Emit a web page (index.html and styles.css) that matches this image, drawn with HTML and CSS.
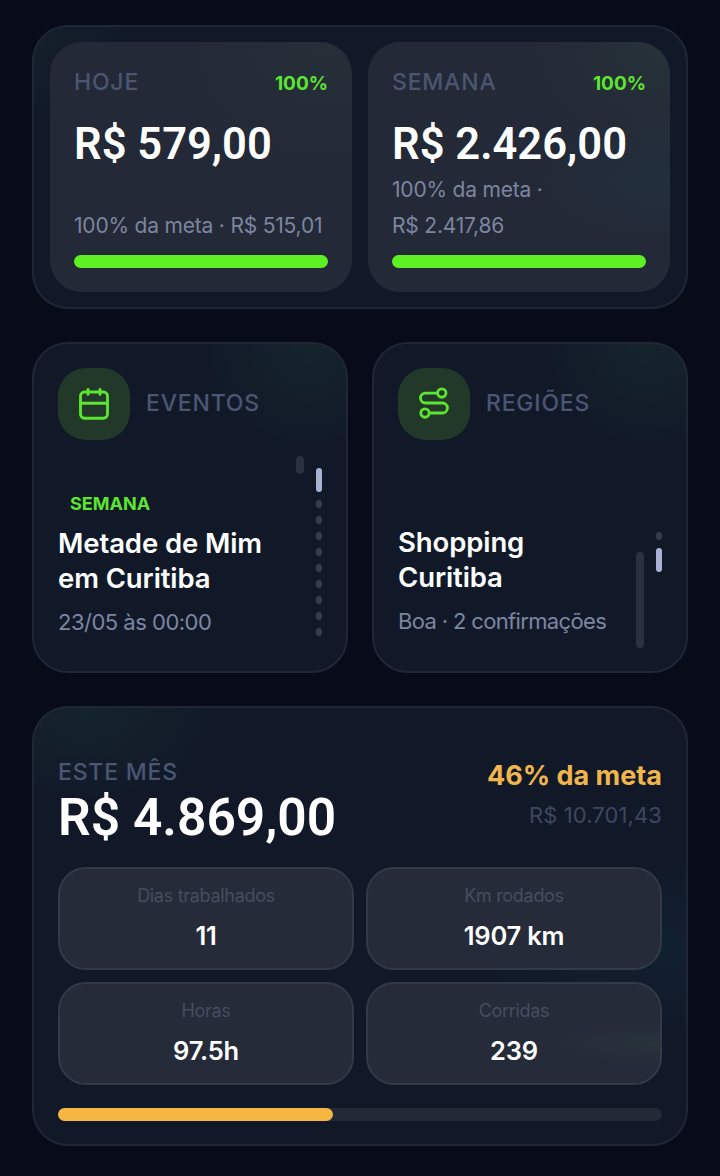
FILE: index.html
```html
<!DOCTYPE html>
<html lang="pt-BR">
<head>
    <meta charset="UTF-8">
    <meta name="viewport" content="width=device-width, initial-scale=1.0">
    <title>Painel</title>
    <link rel="stylesheet" href="styles.css">
</head>
<body>
    <section class="card goals">
        <div class="goal goal-left">
            <div class="goal-head">
                <span class="label">HOJE</span>
                <span class="percent">100%</span>
            </div>
            <div class="amount">R$ 579,00</div>
            <div class="goal-note">100% da meta · R$ 515,01</div>
            <div class="bar"><div class="bar-fill green" style="width: 100%"></div></div>
        </div>
        <div class="goal goal-right">
            <div class="goal-head">
                <span class="label">SEMANA</span>
                <span class="percent">100%</span>
            </div>
            <div class="amount">R$ 2.426,00</div>
            <div class="goal-note goal-note-wrap">100% da meta ·<br>R$ 2.417,86</div>
            <div class="bar"><div class="bar-fill green" style="width: 100%"></div></div>
        </div>
    </section>

    <div class="columns">
        <section class="card panel">
            <div class="panel-head">
                <div class="icon-box">
                    <svg viewBox="0 0 24 24" width="36" height="36" fill="none" stroke="#5ce531" stroke-width="1.9" stroke-linecap="round" stroke-linejoin="round">
                        <rect x="3" y="4" width="18" height="17.5" rx="2.6"></rect>
                        <path d="M3 11.5H21M8 2.2V5.6M16 2.2V5.6"></path>
                    </svg>
                </div>
                <span class="label">EVENTOS</span>
            </div>
            <div class="panel-body">
                <div class="tag">SEMANA</div>
                <h2 class="panel-title">Metade de Mim<br>em Curitiba</h2>
                <div class="panel-note">23/05 às 00:00</div>
            </div>
            <div class="thumb thumb-events"></div>
            <div class="dots dots-events">
                <span class="dot-active"></span>
                <span class="dot"></span><span class="dot"></span><span class="dot"></span>
                <span class="dot"></span><span class="dot"></span><span class="dot"></span>
                <span class="dot"></span><span class="dot"></span><span class="dot"></span>
            </div>
        </section>
        <section class="card panel">
            <div class="panel-head">
                <div class="icon-box">
                    <svg viewBox="0 0 24 24" width="36" height="36" fill="none" stroke="#5ce531" stroke-width="1.9" stroke-linecap="round" stroke-linejoin="round">
                        <circle cx="17.2" cy="4.7" r="2.8"></circle>
                        <circle cx="6" cy="18" r="2.8"></circle>
                        <path d="M14.4 4.7H6.3a3.3 3.3 0 0 0 0 6.6H17.6a3.35 3.35 0 0 1 0 6.7H8.8"></path>
                    </svg>
                </div>
                <span class="label">REGIÕES</span>
            </div>
            <div class="panel-body panel-body-plain">
                <h2 class="panel-title">Shopping<br>Curitiba</h2>
                <div class="panel-note panel-note-long">Boa · 2 confirmações</div>
            </div>
            <div class="thumb thumb-regions"></div>
            <div class="dots dots-regions">
                <span class="dot"></span>
                <span class="dot-active"></span>
            </div>
        </section>
    </div>

    <section class="card month">
        <div class="month-head">
            <div>
                <div class="label month-label">ESTE MÊS</div>
                <div class="amount month-amount">R$ 4.869,00</div>
            </div>
            <div class="month-goal">
                <div class="month-percent">46% da meta</div>
                <div class="month-target">R$ 10.701,43</div>
            </div>
        </div>
        <div class="stats">
            <div class="stat">
                <div class="stat-label">Dias trabalhados</div>
                <div class="stat-value">11</div>
            </div>
            <div class="stat">
                <div class="stat-label">Km rodados</div>
                <div class="stat-value">1907 km</div>
            </div>
            <div class="stat">
                <div class="stat-label">Horas</div>
                <div class="stat-value">97.5h</div>
            </div>
            <div class="stat stat-last">
                <div class="stat-label">Corridas</div>
                <div class="stat-value">239</div>
            </div>
        </div>
        <div class="bar month-bar"><div class="bar-fill amber" style="width: 45.6%"></div></div>
    </section>
</body>
</html>
```

FILE: styles.css
```css
* {
    box-sizing: border-box;
}

body {
    margin: 0;
    padding: 25px 32px 30px;
    background-color: #080c19;
    color: white;
    font-family: Inter, "Noto Sans", sans-serif;
}

.card {
    background-color: #111929;
    border: 2px solid #1f2735;
}

.goals {
    display: flex;
    gap: 16px;
    height: 284px;
    padding: 15px 16px;
    border-radius: 36px;
    background-image: radial-gradient(circle at 0 0, rgba(70, 130, 80, 0.07), transparent 90px);
}

.goal {
    flex: 1;
    display: flex;
    flex-direction: column;
    padding: 25px 24px 24px;
    border-radius: 32px;
    background-color: #232936;
}

.goal-left {
    background-image: radial-gradient(ellipse at 90% 0, rgba(70, 130, 80, 0.07), transparent 150px);
}

.goal-right {
    background-image: radial-gradient(ellipse at 100% 0, rgba(70, 130, 80, 0.1), transparent 150px),
        radial-gradient(ellipse at 100% 55%, rgba(30, 80, 110, 0.14), transparent 150px);
}

.goal-head {
    display: flex;
    justify-content: space-between;
    align-items: center;
    height: 32px;
}

.label {
    padding-bottom: 2px;
    color: #4a5672;
    font-size: 23px;
    font-weight: 500;
    letter-spacing: 0.8px;
}

.percent {
    color: #5ce531;
    font-size: 19px;
    font-weight: 700;
}

.amount {
    margin-top: 18px;
    font-family: Roboto, sans-serif;
    font-size: 43.5px;
    font-weight: 600;
    line-height: 56px;
}

.goal-note {
    margin-top: auto;
    color: #7c86a0;
    font-size: 21px;
    letter-spacing: -0.2px;
    line-height: 36px;
}

.goal-note-wrap {
    margin-top: -1px;
}

.bar {
    height: 13px;
    border-radius: 7px;
    background-color: #232936;
}

.goal .bar {
    margin-top: 11px;
}

.bar-fill {
    height: 100%;
    border-radius: 7px;
}

.green {
    background-color: #5df022;
}

.amber {
    background-color: #f5b642;
}

.columns {
    display: flex;
    gap: 24px;
    margin-top: 33px;
}

.panel {
    position: relative;
    flex: 1;
    height: 331px;
    padding: 24px;
    border-radius: 36px;
    background-image: radial-gradient(circle at 88% 0, rgba(50, 110, 60, 0.13), transparent 105px);
}

.panel-head {
    display: flex;
    align-items: center;
    gap: 16px;
}

.icon-box {
    display: flex;
    justify-content: center;
    align-items: center;
    width: 72px;
    height: 72px;
    border-radius: 28px;
    background-color: #22392a;
}

.panel-body {
    margin-top: 53px;
}

.panel-body-plain {
    margin-top: 85px;
}

.tag {
    margin-left: 12px;
    color: #5ce531;
    font-size: 18px;
    font-weight: 700;
    line-height: 22px;
}

.panel-title {
    margin: 11px 0 0;
    font-size: 27.5px;
    font-weight: 600;
    letter-spacing: -0.1px;
    line-height: 35px;
}

.panel-note {
    margin-top: 11px;
    color: #7c86a0;
    font-size: 22px;
    letter-spacing: -0.5px;
    line-height: 30px;
}

.panel-note-long {
    letter-spacing: -0.65px;
}

.thumb {
    position: absolute;
    width: 8px;
    border-radius: 4px;
    background-color: #2a303d;
}

.thumb-events {
    top: 112px;
    left: 262px;
    height: 18px;
}

.thumb-regions {
    top: 208px;
    left: 262px;
    height: 96px;
}

.dots {
    position: absolute;
    left: 282px;
    display: flex;
    flex-direction: column;
    align-items: center;
    gap: 8px;
    width: 6px;
}

.dots-events {
    top: 124px;
}

.dots-regions {
    top: 188px;
}

.dot {
    width: 6px;
    height: 8px;
    border-radius: 3px;
    background-color: #343c4b;
}

.dot-active {
    width: 6px;
    height: 24px;
    border-radius: 3px;
    background-color: #a7b2d3;
}

.month {
    height: 440px;
    margin-top: 33px;
    padding: 50px 24px 0;
    border-radius: 36px;
    background-image: radial-gradient(ellipse at 8% 0, rgba(50, 110, 60, 0.12), transparent 130px),
        radial-gradient(ellipse at 100% 55%, rgba(20, 70, 80, 0.16), transparent 220px);
}

.month-head {
    display: flex;
    justify-content: space-between;
}

.month-label {
    padding-bottom: 0;
    line-height: 28px;
}

.month-amount {
    margin-top: 2px;
    font-size: 51.5px;
    line-height: 60px;
}

.month-goal {
    text-align: right;
}

.month-percent {
    color: #f0b54c;
    font-size: 27px;
    font-weight: 700;
    letter-spacing: 0;
    line-height: 36px;
}

.month-target {
    margin-top: 6px;
    color: #3d4760;
    font-size: 22px;
    letter-spacing: 0.1px;
    line-height: 30px;
}

.stats {
    display: grid;
    grid-template-columns: 1fr 1fr;
    gap: 12px;
    margin-top: 19px;
}

.stat {
    height: 103px;
    padding-top: 16px;
    border: 2px solid #323947;
    border-radius: 28px;
    background-color: #252b38;
    text-align: center;
}

.stat-last {
    background-image: radial-gradient(ellipse at 100% 60%, rgba(60, 110, 80, 0.12), transparent 110px);
}

.stat-label {
    color: #454d61;
    font-size: 18px;
    letter-spacing: -0.3px;
    line-height: 22px;
}

.stat-value {
    margin-top: 12px;
    font-size: 25.5px;
    font-weight: 600;
    letter-spacing: -0.2px;
    line-height: 34px;
}

.month-bar {
    margin-top: 23px;
}
```
